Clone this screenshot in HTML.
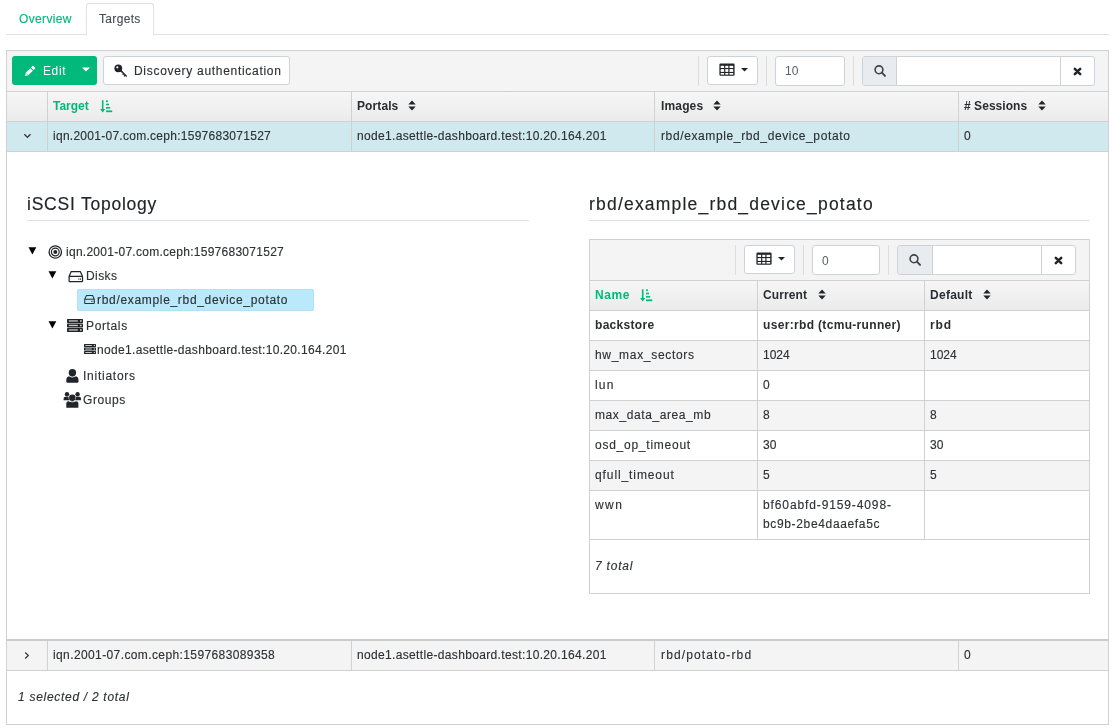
<!DOCTYPE html>
<html><head><meta charset="utf-8">
<style>
*{box-sizing:border-box;margin:0;padding:0}
html,body{width:1113px;height:728px;overflow:hidden;background:#fff}
body{position:relative;font-family:"Liberation Sans",sans-serif;font-size:12px;color:#2e3235;-webkit-text-stroke-width:0.15px}
.b{color:#2a2e32;-webkit-text-stroke-width:0}
.a{position:absolute}
.t{position:absolute;white-space:nowrap;line-height:14px;height:14px;will-change:transform}
.hl{position:absolute;background:#d1d1d1}
.vl{position:absolute;background:#d1d1d1;width:1px}
.grn{color:#00b97b}
.b{font-weight:bold}
svg{position:absolute;display:block}
.btn{position:absolute;border:1px solid #ccd3db;border-radius:3px;background:#fff}
.sep{position:absolute;width:1px;background:#dcdcdc}
.hdr{background:linear-gradient(#f6f6f6,#ebebeb)}
</style></head><body>

<!-- tabs -->
<div class="a" style="left:6px;top:34px;width:1103px;height:1px;background:#dee2e6"></div>
<div class="a" style="left:86px;top:3px;width:68px;height:32px;border:1px solid #dee2e6;border-bottom:none;border-radius:3px 3px 0 0;background:#fff"></div>
<div class="t grn" style="left:19px;top:12px;letter-spacing:0.36px">Overview</div>
<div class="t" style="left:99px;top:12px;color:#495057;letter-spacing:0.33px">Targets</div>

<!-- outer table frame -->
<div class="a" style="left:6px;top:50px;width:1103px;height:675px;border:1px solid #d1d1d1"></div>
<div class="a" style="left:7px;top:51px;width:1101px;height:40px;background:#f4f4f4"></div>
<div class="hl" style="left:7px;top:91px;width:1101px;height:1px"></div>
<div class="a hdr" style="left:7px;top:92px;width:1101px;height:29px"></div>
<div class="hl" style="left:7px;top:121px;width:1101px;height:1px"></div>
<div class="a" style="left:7px;top:122px;width:1101px;height:29px;background:#cfe9ee"></div>
<div class="hl" style="left:7px;top:151px;width:1101px;height:1px"></div>
<div class="hl" style="left:7px;top:639px;width:1101px;height:2px;background:#cbcbcb"></div>
<div class="a" style="left:7px;top:641px;width:1101px;height:29px;background:#f4f4f4"></div>
<div class="hl" style="left:7px;top:670px;width:1101px;height:1px"></div>
<!-- column dividers -->
<div class="vl" style="left:47px;top:92px;height:59px"></div>
<div class="vl" style="left:351px;top:92px;height:59px"></div>
<div class="vl" style="left:654px;top:92px;height:59px"></div>
<div class="vl" style="left:958px;top:92px;height:59px"></div>
<div class="vl" style="left:47px;top:641px;height:29px"></div>
<div class="vl" style="left:351px;top:641px;height:29px"></div>
<div class="vl" style="left:654px;top:641px;height:29px"></div>
<div class="vl" style="left:958px;top:641px;height:29px"></div>


<!-- toolbar -->
<div class="a" style="left:12px;top:56px;width:85px;height:29px;background:#00b97b;border-radius:3px"></div>
<svg style="left:24px;top:65px" width="12" height="12" viewBox="0 0 12 12"><path d="M1.1 10.9 L1.73 7.73 L6.33 3.13 L8.87 5.67 L4.27 10.27 Z" fill="#fff"/><path d="M7.03 2.43 L8.6 0.86 Q8.93 0.53 9.26 0.86 L11.14 2.74 Q11.47 3.07 11.14 3.4 L9.57 4.97 Z" fill="#fff"/><path d="M2.3 8.6 L3.5 9.8" stroke="#00b97b" stroke-width="0.8"/></svg>
<div class="t" style="left:43px;top:64px;color:#fff;-webkit-text-stroke-width:0;letter-spacing:0.6px">Edit</div>
<svg style="left:82px;top:67px" width="8" height="5" viewBox="0 0 8 5"><path d="M0 0.5 H8 L4 4.5 Z" fill="#fff"/></svg>

<div class="btn" style="left:103px;top:56px;width:187px;height:29px"></div>
<svg style="left:114px;top:64px" width="14" height="14" viewBox="0 0 14 14"><circle cx="4.3" cy="4.3" r="3.9" fill="#212529"/><circle cx="3.3" cy="3.3" r="1.1" fill="#fff"/><path d="M5.5 6.8 L6.8 5.5 L13.2 11.9 L12.2 12.9 L11.3 12 L10.5 12.8 L9.6 11.9 L10.4 11.1 L9.8 10.5 L9 11.3 L8.2 10.5 L9 9.7 Z" fill="#212529"/></svg>
<div class="t" style="left:134px;top:64px;letter-spacing:0.7px">Discovery authentication</div>

<div class="sep" style="left:698px;top:56px;height:30px"></div>
<div class="btn" style="left:707px;top:56px;width:51px;height:29px"></div>
<svg style="left:719px;top:63px" width="16" height="13" viewBox="0 0 16 13"><rect x="0.4" y="0.5" width="15.2" height="12.3" rx="1.2" fill="#212529"/><g fill="#fff"><rect x="1.7" y="2.8" width="3.4" height="2.2"/><rect x="6.3" y="2.8" width="3.0" height="2.2"/><rect x="10.5" y="2.8" width="3.7" height="2.2"/><rect x="1.7" y="6.1" width="3.4" height="2.8"/><rect x="6.3" y="6.1" width="3.0" height="2.8"/><rect x="10.5" y="6.1" width="3.7" height="2.8"/><rect x="1.7" y="10.0" width="3.4" height="1.6"/><rect x="6.3" y="10.0" width="3.0" height="1.6"/><rect x="10.5" y="10.0" width="3.7" height="1.6"/></g></svg>
<svg style="left:741px;top:68px" width="7" height="4" viewBox="0 0 7 4"><path d="M0 0 H7 L3.5 3.5 Z" fill="#212529"/></svg>

<div class="sep" style="left:766px;top:56px;height:30px"></div>
<div class="btn" style="left:775px;top:56px;width:70px;height:30px"></div>
<div class="t" style="left:785px;top:64px;color:#5a6066;-webkit-text-stroke-width:0">10</div>

<div class="sep" style="left:853px;top:56px;height:30px"></div>
<div class="btn" style="left:862px;top:56px;width:233px;height:30px"></div>
<div class="a" style="left:863px;top:57px;width:34px;height:28px;background:#e9ecef;border-radius:2px 0 0 2px;border-right:1px solid #ccd3db"></div>
<svg style="left:874px;top:65px" width="13" height="12" viewBox="0 0 13 12"><circle cx="5" cy="4.8" r="3.9" fill="none" stroke="#3d4349" stroke-width="1.6"/><path d="M7.9 7.7 L11 10.9" stroke="#3d4349" stroke-width="1.9" stroke-linecap="round"/></svg>
<div class="vl" style="left:1060px;top:57px;height:28px;background:#ccd3db"></div>
<svg style="left:1072.5px;top:66.5px" width="9" height="9" viewBox="0 0 9 9"><path d="M1.8 1.8 L7.2 7.2 M7.2 1.8 L1.8 7.2" stroke="#212529" stroke-width="2.5" stroke-linecap="round"/></svg>

<!-- header text -->
<div class="t b grn" style="left:53px;top:99px;letter-spacing:0px">Target</div>
<div class="t b" style="left:357px;top:99px;letter-spacing:0.1px">Portals</div>
<div class="t b" style="left:661px;top:99px;letter-spacing:0.15px">Images</div>
<div class="t b" style="left:964px;top:99px;letter-spacing:0.05px"># Sessions</div>


<!-- header icons -->
<svg style="left:100px;top:100px" width="13" height="13" viewBox="0 0 13 13"><path d="M1.9 0.3 H3.5 V8.9 H5.3 L2.7 12.5 L0.1 8.9 H1.9 Z" fill="#00b97b"/><rect x="6" y="0.4" width="1.9" height="1.7" fill="#00b97b"/><rect x="6" y="3.7" width="3" height="1.6" fill="#00b97b"/><rect x="6" y="7" width="4.2" height="1.6" fill="#00b97b"/><rect x="6" y="10.4" width="6.2" height="1.8" fill="#00b97b"/></svg>
<svg class="srt" style="left:408px;top:100px" width="8" height="11" viewBox="0 0 8 11"><path d="M4 0.5 L7.7 4.6 H0.3 Z M4 10.5 L7.7 6.4 H0.3 Z" fill="#212529"/></svg>
<svg class="srt" style="left:713px;top:100px" width="8" height="11" viewBox="0 0 8 11"><path d="M4 0.5 L7.7 4.6 H0.3 Z M4 10.5 L7.7 6.4 H0.3 Z" fill="#212529"/></svg>
<svg class="srt" style="left:1038px;top:100px" width="8" height="11" viewBox="0 0 8 11"><path d="M4 0.5 L7.7 4.6 H0.3 Z M4 10.5 L7.7 6.4 H0.3 Z" fill="#212529"/></svg>
<!-- chevrons -->
<svg style="left:23px;top:133px" width="9" height="6" viewBox="0 0 9 6"><path d="M1.3 1.2 L4.4 4.3 L7.5 1.2" fill="none" stroke="#3a3f44" stroke-width="1.35"/></svg>
<svg style="left:24px;top:651px" width="7" height="9" viewBox="0 0 7 9"><path d="M1.2 1.4 L4.3 4.5 L1.2 7.6" fill="none" stroke="#3a3f44" stroke-width="1.35"/></svg>

<!-- row 1 -->
<div class="t" style="left:53px;top:129px;letter-spacing:0.27px">iqn.2001-07.com.ceph:1597683071527</div>
<div class="t" style="left:357px;top:129px;letter-spacing:0.34px">node1.asettle-dashboard.test:10.20.164.201</div>
<div class="t" style="left:661px;top:129px;letter-spacing:0.62px">rbd/example_rbd_device_potato</div>
<div class="t" style="left:964px;top:129px">0</div>

<!-- row 2 -->
<div class="t" style="left:53px;top:648px;letter-spacing:0.39px">iqn.2001-07.com.ceph:1597683089358</div>
<div class="t" style="left:357px;top:648px;letter-spacing:0.34px">node1.asettle-dashboard.test:10.20.164.201</div>
<div class="t" style="left:661px;top:648px;letter-spacing:1.13px">rbd/potato-rbd</div>
<div class="t" style="left:964px;top:648px">0</div>


<!-- ===== detail: left ===== -->
<div class="t" style="left:27px;top:194px;color:#212529;font-size:17.5px;line-height:20px;height:20px;letter-spacing:0.77px">iSCSI Topology</div>
<div class="a" style="left:27px;top:220px;width:502px;height:1px;background:#dee2e6"></div>

<svg style="left:28px;top:247px" width="9" height="8" viewBox="0 0 9 8"><path d="M0.5 0.3 H8.3 L4.4 7.6 Z" fill="#000"/></svg>
<svg style="left:48px;top:245px" width="15" height="15" viewBox="0 0 15 15"><g fill="none" stroke="#212529"><circle cx="7.3" cy="7" r="6.2" stroke-width="1.3"/><circle cx="7.3" cy="7" r="3.9" stroke-width="1.2"/></g><circle cx="7.3" cy="7" r="2" fill="#212529"/></svg>
<div class="t" style="left:66px;top:245px;letter-spacing:0.27px">iqn.2001-07.com.ceph:1597683071527</div>

<svg style="left:48px;top:271px" width="9" height="8" viewBox="0 0 9 8"><path d="M0.5 0.3 H8.3 L4.4 7.6 Z" fill="#000"/></svg>
<svg style="left:68px;top:270px" width="16" height="13" viewBox="0 0 16 13"><path d="M3.2 1.6 H12.3 L14.5 6.4 V10.9 Q14.5 11.5 13.9 11.5 H1.7 Q1.1 11.5 1.1 10.9 V6.4 Z M1.1 6.4 H14.5" fill="none" stroke="#212529" stroke-width="1.25" stroke-linejoin="round"/><rect x="10.4" y="8.4" width="1" height="1.3" fill="#212529"/><rect x="12" y="8.4" width="1" height="1.3" fill="#212529"/></svg>
<div class="t" style="left:86px;top:269px;letter-spacing:0.4px">Disks</div>

<div class="a" style="left:77px;top:289px;width:237px;height:22px;background:#b9e9fa;border-radius:2px;box-shadow:inset 0 0 0 1px #b2e2f3"></div>
<svg style="left:84px;top:294px" width="12" height="11" viewBox="0 0 12 11"><path d="M2.5 1.5 H8.6 L10.3 5.3 V9 Q10.3 9.5 9.8 9.5 H1.2 Q0.7 9.5 0.7 9 V5.3 Z M0.7 5.3 H10.3" fill="none" stroke="#2e3235" stroke-width="1.05" stroke-linejoin="round"/><rect x="7.2" y="6.9" width="0.8" height="1" fill="#2e3235"/><rect x="8.5" y="6.9" width="0.8" height="1" fill="#2e3235"/></svg>
<div class="t" style="left:97px;top:293px;letter-spacing:0.68px">rbd/example_rbd_device_potato</div>

<svg style="left:48px;top:321px" width="9" height="8" viewBox="0 0 9 8"><path d="M0.5 0.3 H8.3 L4.4 7.6 Z" fill="#000"/></svg>
<svg style="left:67px;top:319px" width="17" height="13" viewBox="0 0 17 13"><g fill="#212529"><rect x="0" y="0" width="16" height="3.9" rx="0.7"/><rect x="0" y="4.5" width="16" height="3.9" rx="0.7"/><rect x="0" y="9" width="16" height="3.9" rx="0.7"/></g><g fill="#c8c8c8"><rect x="1.8" y="1.3" width="9" height="1.3"/><rect x="1.8" y="5.8" width="9" height="1.3"/><rect x="1.8" y="10.3" width="9" height="1.3"/></g><g fill="#fff"><rect x="13.2" y="1.2" width="1.3" height="1.5"/><rect x="13.2" y="5.7" width="1.3" height="1.5"/><rect x="13.2" y="10.2" width="1.3" height="1.5"/></g></svg>
<div class="t" style="left:86px;top:319px;letter-spacing:0.63px">Portals</div>

<svg style="left:84px;top:344px" width="12" height="10" viewBox="0 0 12 10"><g fill="#212529"><rect x="0" y="0" width="12" height="3" rx="0.5"/><rect x="0" y="3.5" width="12" height="3" rx="0.5"/><rect x="0" y="7" width="12" height="3" rx="0.5"/></g><g fill="#c8c8c8"><rect x="1.3" y="1" width="6.5" height="1"/><rect x="1.3" y="4.5" width="6.5" height="1"/><rect x="1.3" y="8" width="6.5" height="1"/></g><g fill="#fff"><rect x="9.8" y="0.9" width="1" height="1.2"/><rect x="9.8" y="4.4" width="1" height="1.2"/><rect x="9.8" y="7.9" width="1" height="1.2"/></g></svg>
<div class="t" style="left:97px;top:343px;letter-spacing:0.34px">node1.asettle-dashboard.test:10.20.164.201</div>

<svg style="left:66px;top:368px" width="13" height="15" viewBox="0 0 13 15"><circle cx="6.4" cy="4.7" r="3.7" fill="#212529"/><path d="M0.3 13.6 V12 Q0.3 8.2 3.8 8.2 H9 Q12.5 8.2 12.5 12 V13.6 Q12.5 14.8 11.3 14.8 H1.5 Q0.3 14.8 0.3 13.6 Z" fill="#212529"/><path d="M3.4 8.3 Q6.4 9.9 9.4 8.3" fill="none" stroke="#fff" stroke-width="0.8"/></svg>
<div class="t" style="left:83px;top:369px;letter-spacing:0.75px">Initiators</div>

<svg style="left:63px;top:391px" width="19" height="17" viewBox="0 0 19 17"><g fill="#212529"><circle cx="4" cy="3.3" r="2.2"/><circle cx="14.6" cy="3.3" r="2.2"/><path d="M0.6 9.3 V7.6 Q0.6 5.8 2.4 5.8 H5.4 Q5.6 8 6.6 9.3 Z"/><path d="M18 9.3 V7.6 Q18 5.8 16.2 5.8 H13.2 Q13 8 12 9.3 Z"/><circle cx="9.3" cy="6.8" r="3.3"/><path d="M3.3 16.8 V12.6 Q3.3 10.2 5.7 10.2 H12.9 Q15.4 10.2 15.4 12.6 V16.8 Z"/></g><path d="M6 10.2 Q9.3 11.6 12.6 10.2" fill="none" stroke="#fff" stroke-width="0.8"/></svg>
<div class="t" style="left:83px;top:393px;letter-spacing:0.56px">Groups</div>


<!-- ===== detail: right ===== -->
<div class="t" style="left:589px;top:194px;color:#212529;font-size:17.5px;line-height:20px;height:20px;letter-spacing:1.2px">rbd/example_rbd_device_potato</div>
<div class="a" style="left:589px;top:220px;width:501px;height:1px;background:#dee2e6"></div>

<div class="a" style="left:589px;top:239px;width:501px;height:355px;border:1px solid #d1d1d1"></div>
<div class="a" style="left:590px;top:240px;width:499px;height:40px;background:#f4f4f4"></div>
<div class="hl" style="left:590px;top:280px;width:499px;height:1px"></div>
<div class="a hdr" style="left:590px;top:281px;width:499px;height:29px"></div>
<div class="hl" style="left:590px;top:310px;width:499px;height:1px"></div>
<div class="hl" style="left:590px;top:340px;width:499px;height:1px"></div>
<div class="a" style="left:590px;top:341px;width:499px;height:29px;background:#f4f4f4"></div>
<div class="hl" style="left:590px;top:370px;width:499px;height:1px"></div>
<div class="hl" style="left:590px;top:400px;width:499px;height:1px"></div>
<div class="a" style="left:590px;top:401px;width:499px;height:29px;background:#f4f4f4"></div>
<div class="hl" style="left:590px;top:430px;width:499px;height:1px"></div>
<div class="hl" style="left:590px;top:460px;width:499px;height:1px"></div>
<div class="a" style="left:590px;top:461px;width:499px;height:29px;background:#f4f4f4"></div>
<div class="hl" style="left:590px;top:490px;width:499px;height:1px"></div>
<div class="hl" style="left:590px;top:539px;width:499px;height:1px"></div>
<div class="vl" style="left:757px;top:281px;height:258px"></div>
<div class="vl" style="left:924px;top:281px;height:258px"></div>

<div class="sep" style="left:735px;top:245px;height:30px"></div>
<div class="btn" style="left:744px;top:245px;width:51px;height:29px"></div>
<svg style="left:756px;top:252px" width="16" height="13" viewBox="0 0 16 13"><rect x="0.4" y="0.5" width="15.2" height="12.3" rx="1.2" fill="#212529"/><g fill="#fff"><rect x="1.7" y="2.8" width="3.4" height="2.2"/><rect x="6.3" y="2.8" width="3.0" height="2.2"/><rect x="10.5" y="2.8" width="3.7" height="2.2"/><rect x="1.7" y="6.1" width="3.4" height="2.8"/><rect x="6.3" y="6.1" width="3.0" height="2.8"/><rect x="10.5" y="6.1" width="3.7" height="2.8"/><rect x="1.7" y="10.0" width="3.4" height="1.6"/><rect x="6.3" y="10.0" width="3.0" height="1.6"/><rect x="10.5" y="10.0" width="3.7" height="1.6"/></g></svg>
<svg style="left:778px;top:257px" width="7" height="4" viewBox="0 0 7 4"><path d="M0 0 H7 L3.5 3.5 Z" fill="#212529"/></svg>
<div class="sep" style="left:803px;top:245px;height:30px"></div>
<div class="btn" style="left:812px;top:245px;width:68px;height:30px"></div>
<div class="t" style="left:822px;top:254px;color:#5a6066;-webkit-text-stroke-width:0">0</div>
<div class="sep" style="left:888px;top:245px;height:30px"></div>
<div class="btn" style="left:897px;top:245px;width:179px;height:30px"></div>
<div class="a" style="left:898px;top:246px;width:35px;height:28px;background:#e9ecef;border-radius:2px 0 0 2px;border-right:1px solid #ccd3db"></div>
<svg style="left:909px;top:254px" width="13" height="12" viewBox="0 0 13 12"><circle cx="5" cy="4.8" r="3.9" fill="none" stroke="#3d4349" stroke-width="1.6"/><path d="M7.9 7.7 L11 10.9" stroke="#3d4349" stroke-width="1.9" stroke-linecap="round"/></svg>
<div class="vl" style="left:1041px;top:246px;height:28px;background:#ccd3db"></div>
<svg style="left:1054px;top:256px" width="9" height="9" viewBox="0 0 9 9"><path d="M1.8 1.8 L7.2 7.2 M7.2 1.8 L1.8 7.2" stroke="#212529" stroke-width="2.5" stroke-linecap="round"/></svg>

<div class="t b grn" style="left:595px;top:288px;letter-spacing:0.6px">Name</div>
<svg style="left:640px;top:289px" width="13" height="13" viewBox="0 0 13 13"><path d="M1.9 0.3 H3.5 V8.9 H5.3 L2.7 12.5 L0.1 8.9 H1.9 Z" fill="#00b97b"/><rect x="6" y="0.4" width="1.9" height="1.7" fill="#00b97b"/><rect x="6" y="3.7" width="3" height="1.6" fill="#00b97b"/><rect x="6" y="7" width="4.2" height="1.6" fill="#00b97b"/><rect x="6" y="10.4" width="6.2" height="1.8" fill="#00b97b"/></svg>
<div class="t b" style="left:763px;top:288px;letter-spacing:0.1px">Current</div>
<svg style="left:818px;top:289px" width="8" height="11" viewBox="0 0 8 11"><path d="M4 0.5 L7.7 4.6 H0.3 Z M4 10.5 L7.7 6.4 H0.3 Z" fill="#212529"/></svg>
<div class="t b" style="left:930px;top:288px;letter-spacing:0.27px">Default</div>
<svg style="left:983px;top:289px" width="8" height="11" viewBox="0 0 8 11"><path d="M4 0.5 L7.7 4.6 H0.3 Z M4 10.5 L7.7 6.4 H0.3 Z" fill="#212529"/></svg>

<div class="t b" style="left:595px;top:318px;letter-spacing:0.3px">backstore</div>
<div class="t b" style="left:763px;top:318px;letter-spacing:0.33px">user:rbd (tcmu-runner)</div>
<div class="t b" style="left:930px;top:318px;letter-spacing:0.9px">rbd</div>
<div class="t" style="left:595px;top:348px;letter-spacing:0.69px">hw_max_sectors</div>
<div class="t" style="left:763px;top:348px">1024</div>
<div class="t" style="left:930px;top:348px">1024</div>
<div class="t" style="left:595px;top:378px;letter-spacing:1.2px">lun</div>
<div class="t" style="left:763px;top:378px">0</div>
<div class="t" style="left:595px;top:408px;letter-spacing:0.59px">max_data_area_mb</div>
<div class="t" style="left:763px;top:408px">8</div>
<div class="t" style="left:930px;top:408px">8</div>
<div class="t" style="left:595px;top:438px;letter-spacing:0.75px">osd_op_timeout</div>
<div class="t" style="left:763px;top:438px">30</div>
<div class="t" style="left:930px;top:438px">30</div>
<div class="t" style="left:595px;top:468px;letter-spacing:0.9px">qfull_timeout</div>
<div class="t" style="left:763px;top:468px">5</div>
<div class="t" style="left:930px;top:468px">5</div>
<div class="t" style="left:595px;top:498px;letter-spacing:1.4px">wwn</div>
<div class="t" style="left:763px;top:498px;letter-spacing:0.88px">bf60abfd-9159-4098-</div>
<div class="t" style="left:763px;top:517px;letter-spacing:0.65px">bc9b-2be4daaefa5c</div>
<div class="t" style="left:595px;top:559px;font-style:italic;letter-spacing:0.78px">7 total</div>

<!-- footer -->
<div class="t" style="left:18px;top:690px;font-style:italic;letter-spacing:0.71px">1 selected / 2 total</div>

</body></html>
